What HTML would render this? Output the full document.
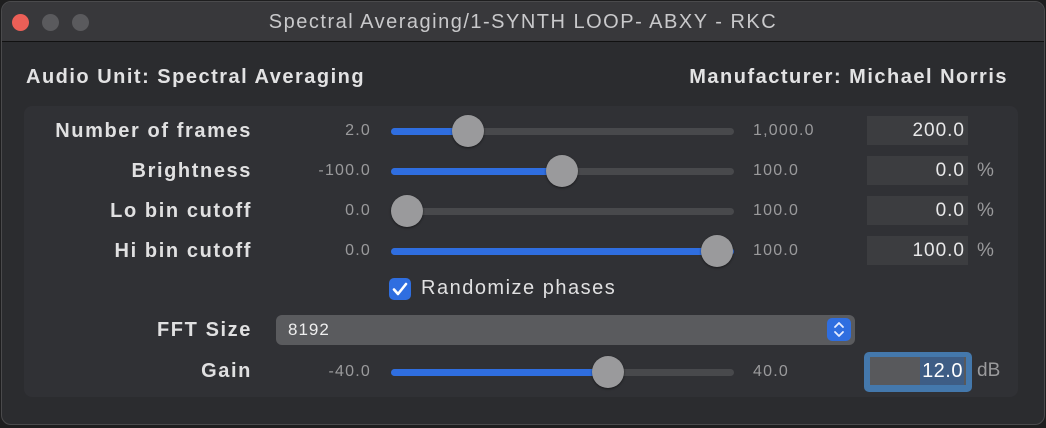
<!DOCTYPE html>
<html><head><meta charset="utf-8"><style>
*{margin:0;padding:0;box-sizing:border-box}
body{width:1046px;height:428px;background:#1e1e1f;font-family:"Liberation Sans",sans-serif;position:relative;overflow:hidden}
.win{position:absolute;left:1px;top:1px;width:1044px;height:424px;background:#2b2c2f;border:1px solid #4a4a4c;border-radius:10px;overflow:hidden}
.tb{position:absolute;left:0;top:0;width:100%;height:40px;background:#38383b;border-bottom:1px solid #111}
.dot{position:absolute;top:12px;width:17px;height:17px;border-radius:50%;background:#5a5a5d}
.title{position:absolute;top:9px;left:0;width:100%;text-align:center;color:#c9c9cb;font-size:20px;letter-spacing:1.5px}
.hdr{position:absolute;top:64px;color:#e2e2e3;font-weight:bold;font-size:20px;letter-spacing:1.5px}
.panel{position:absolute;left:24px;top:106px;width:994px;height:291px;background:#303135;border-radius:8px}
.lbl{position:absolute;right:794px;color:#e0e0e1;font-weight:bold;font-size:20px;letter-spacing:1.6px;text-align:right;white-space:nowrap}
.mn{position:absolute;color:#9a9a9c;font-size:16px;letter-spacing:1.2px;text-align:right;width:70px;left:301px}
.mx{position:absolute;color:#9a9a9c;font-size:16px;letter-spacing:1.2px;left:753px}
.tr{position:absolute;left:391px;width:343px;height:7px;border-radius:4px;background:#48494c}
.fill{position:absolute;left:0;top:0;height:7px;border-radius:4px;background:#2f6ee0}
.th{position:absolute;width:32px;height:32px;border-radius:50%;background:#9a9a9c;top:-13px;box-shadow:0 1px 2px rgba(0,0,0,.5)}
.vb{position:absolute;left:867px;width:101px;height:29px;background:#3c3d40;color:#e8e8e9;font-size:19px;letter-spacing:1px;text-align:right;padding:4px 3px 0 0}
.u{position:absolute;left:977px;color:#9a9a9c;font-size:19px}
</style></head><body>
<div class="win">
<div class="tb"><div class="dot" style="left:10px;background:#ec5f57"></div><div class="dot" style="left:40px"></div><div class="dot" style="left:70px"></div>
<div class="title">Spectral Averaging/1-SYNTH LOOP- ABXY - RKC</div></div>
<div class="hdr" style="left:24px">Audio Unit: Spectral Averaging</div>
<div class="hdr" style="right:36px">Manufacturer: Michael Norris</div>
</div>
<div class="panel"></div>
<div class="lbl" style="top:120px">Number of frames</div>
<div class="lbl" style="top:160px">Brightness</div>
<div class="lbl" style="top:200px">Lo bin cutoff</div>
<div class="lbl" style="top:240px">Hi bin cutoff</div>
<div class="lbl" style="top:319px">FFT Size</div>
<div class="lbl" style="top:360px">Gain</div>
<div class="mn" style="top:122px">2.0</div><div class="mx" style="top:122px">1,000.0</div>
<div class="mn" style="top:162px">-100.0</div><div class="mx" style="top:162px">100.0</div>
<div class="mn" style="top:202px">0.0</div><div class="mx" style="top:202px">100.0</div>
<div class="mn" style="top:242px">0.0</div><div class="mx" style="top:242px">100.0</div>
<div class="mn" style="top:363px">-40.0</div><div class="mx" style="top:363px">40.0</div>
<div class="tr" style="top:128px"><div class="fill" style="width:80px"></div><div class="th" style="left:61px"></div></div>
<div class="tr" style="top:168px"><div class="fill" style="width:172px"></div><div class="th" style="left:155px"></div></div>
<div class="tr" style="top:208px"><div class="th" style="left:0px"></div></div>
<div class="tr" style="top:248px"><div class="fill" style="width:343px"></div><div class="th" style="left:310px"></div></div>
<div class="tr" style="top:369px"><div class="fill" style="width:218px"></div><div class="th" style="left:201px"></div></div>
<div class="vb" style="top:116px">200.0</div>
<div class="vb" style="top:156px">0.0</div><div class="u" style="top:160px">%</div>
<div class="vb" style="top:196px">0.0</div><div class="u" style="top:200px">%</div>
<div class="vb" style="top:236px">100.0</div><div class="u" style="top:240px">%</div>
<div style="position:absolute;left:389px;top:278px;width:22px;height:22px;border-radius:5px;background:#2f6ee0"><svg width="22" height="22"><path d="M5 11.5l4 4.5 8-10" stroke="#fff" stroke-width="2.6" fill="none" stroke-linecap="round" stroke-linejoin="round"/></svg></div>
<div style="position:absolute;left:421px;top:277px;color:#e0e0e1;font-size:20px;letter-spacing:1.5px">Randomize phases</div>
<div style="position:absolute;left:276px;top:315px;width:579px;height:30px;border-radius:6px;background:#5a5b5e;color:#eee;font-size:17px;letter-spacing:1px;padding:5px 0 0 12px">8192
<div style="position:absolute;right:4px;top:3px;width:24px;height:23px;border-radius:5px;background:#2f6ee0"><svg width="24" height="23"><path d="M8 9l4-4 4 4M8 14l4 4 4-4" stroke="#e6ecff" stroke-width="1.8" fill="none" stroke-linecap="round" stroke-linejoin="round"/></svg></div></div>
<div style="position:absolute;left:864px;top:352px;width:108px;height:40px;border-radius:5px;background:#4478ac"></div>
<div style="position:absolute;left:870px;top:357px;width:96px;height:28px;background:#58595c"></div>
<div style="position:absolute;left:920px;top:357px;width:44px;height:28px;background:#3e5d85;color:#fff;font-size:20px;letter-spacing:0.5px;text-align:right;padding:3px 1px 0 0">12.0</div>
<div style="position:absolute;left:977px;top:360px;color:#9a9a9c;font-size:19px">dB</div>
</body></html>
